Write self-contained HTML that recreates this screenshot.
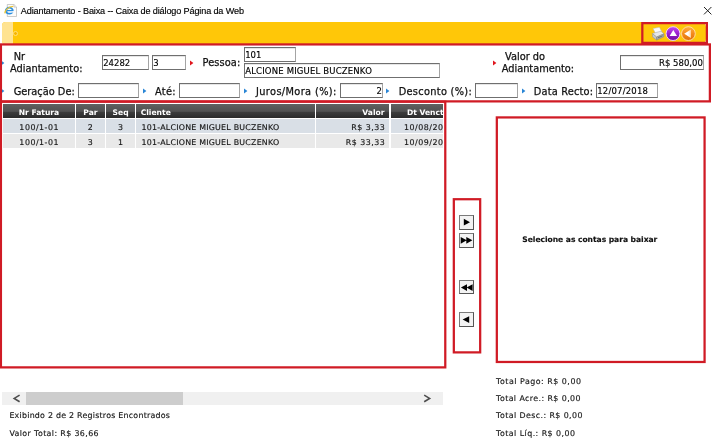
<!DOCTYPE html><html><head><meta charset="utf-8"><title>Adiantamento - Baixa</title><style>
html,body{margin:0;padding:0;background:#fff;}
body{will-change:transform;width:719px;height:443px;position:relative;overflow:hidden;font-family:"DejaVu Sans","Liberation Sans",sans-serif;color:#000;}
.a{position:absolute;white-space:pre;line-height:1;}
.t{font-family:"Liberation Sans",sans-serif;font-size:9.1px;letter-spacing:-0.136px;color:#000;-webkit-text-stroke:0.15px #000;}
.l{font-size:9.8px;color:#111;-webkit-text-stroke:0.25px #111;}
.in{position:absolute;box-sizing:border-box;background:#fff;border:1px solid #6f6f6f;border-right-color:#a4a4a4;box-shadow:inset 0 1px 0 #e6e6e6;font-size:8.5px;line-height:1;white-space:pre;color:#000;overflow:hidden;}
.in span{-webkit-text-stroke:0.15px #000;position:absolute;top:2.6px;left:0.2px;letter-spacing:0px;}
.in span.r{left:auto;right:0.2px;}
.s{font-size:7.9px;color:#111;-webkit-text-stroke:0.15px #222;}
.th{position:absolute;top:104px;height:13.9px;background:linear-gradient(#626262 0%,#5a5a5a 20%,#525252 52%,#3c3c3c 60%,#2b2b2b 100%);color:#fff;font-weight:bold;font-size:7.6px;line-height:17.5px;white-space:pre;overflow:hidden;box-sizing:border-box;}
.td{-webkit-text-stroke:0.15px #222;position:absolute;height:14.5px;font-size:7.9px;letter-spacing:0.22px;line-height:18.3px;white-space:pre;overflow:hidden;color:#111;box-sizing:border-box;}
.r1{top:119.1px;height:13.6px;line-height:17.1px;background:#d9dfe6;}
.r2{top:133.8px;height:13.9px;line-height:17.7px;background:#e9e9e9;}
.c{text-align:center;}
.rt{text-align:right;}
.btn{position:absolute;left:459px;width:15px;height:14.5px;box-sizing:border-box;border:1px solid #7a7a7a;border-right-color:#555;border-bottom-color:#555;background:#f3f3f3;}
</style></head><body>
<svg class="a" style="left:0;top:0" width="24" height="20" viewBox="0 0 24 20">
<path d="M7.3 4.5h6.6l2.6 2.6v9.4H7.3z" fill="#fcfcfc" stroke="#b4b4b4" stroke-width=".7"/>
<path d="M13.9 4.5v2.6h2.6" fill="#ececec" stroke="#b4b4b4" stroke-width=".6"/>
<ellipse cx="9.3" cy="10.7" rx="3.5" ry="3" fill="none" stroke="#2b8fe0" stroke-width="1.8"/>
<rect x="9.3" y="10.9" width="4.6" height="1.7" fill="#fcfcfc"/>
<rect x="6.6" y="10" width="6.2" height="1.2" fill="#2b8fe0"/>
<path d="M4.8 13.4C5 9.8 8.6 6.6 13.2 6.4" fill="none" stroke="#f2c62a" stroke-width="1.2"/>
</svg>
<div class="a t" id="title" style="left:20.8px;top:6.9px">Adiantamento - Baixa -- Caixa de diálogo Página da Web</div>
<svg class="a" style="left:703px;top:6px" width="10" height="10" viewBox="0 0 10 10"><path d="M1 1l7.4 7.4M8.4 1L1 8.4" stroke="#222" stroke-width="1" fill="none"/></svg>
<div class="a" style="left:2.2px;top:22.2px;width:703.6px;height:21.8px;background:#ffc708;border-radius:3.5px 5px 5px 3.5px;"></div>
<div class="a" style="left:2.2px;top:22.2px;width:11.2px;height:21.8px;background:#ffe391;border-radius:3.5px 0 0 3.5px;"></div>
<div class="a" style="left:12.8px;top:30.6px;width:5.4px;height:5.4px;border-radius:50%;border:1.3px solid #ffe07a;background:#f7b500;box-sizing:border-box;"></div><div class="a" style="left:11px;top:30px;width:2.4px;height:7px;background:#ffe391;"></div>
<svg class="a" style="left:650px;top:25px" width="48" height="18" viewBox="650 25 48 18">
<defs>
<linearGradient id="gp" x1="0" y1="0" x2="0" y2="1"><stop offset="0" stop-color="#c04cf0"/><stop offset=".5" stop-color="#9a1fd0"/><stop offset="1" stop-color="#6f0c9c"/></linearGradient>
<linearGradient id="go" x1="0" y1="0" x2="0" y2="1"><stop offset="0" stop-color="#ffb040"/><stop offset=".5" stop-color="#f58a1a"/><stop offset="1" stop-color="#e07008"/></linearGradient>
<linearGradient id="gt" x1="0" y1="0" x2="1" y2="0"><stop offset="0" stop-color="#fff"/><stop offset=".55" stop-color="#fff"/><stop offset="1" stop-color="#ffd9a8"/></linearGradient>
</defs>
<path d="M653 28.6l6.4-1.4 2.4 4.6-6.2 1.8z" fill="#fbfbfb" stroke="#b8b8b8" stroke-width=".5"/>
<path d="M652.4 33.6l3.2-1 5.4-1.4 3 2.6-7.4 3.2z" fill="#e6e8ea" stroke="#9da1a5" stroke-width=".5"/>
<path d="M652.4 33.6l4.2 3.4v3.1l-4-3.2z" fill="#c4c8cc" stroke="#8e9296" stroke-width=".5"/>
<path d="M656.6 37l7.4-3.2-.2 3-7.2 3.3z" fill="#a4a8ad" stroke="#7e8286" stroke-width=".5"/>
<path d="M658 37.8l4.6-2" stroke="#5f6366" stroke-width=".8"/>
<circle cx="673" cy="33.6" r="6.9" fill="url(#gp)" stroke="#f3d9ff" stroke-width=".9"/>
<path d="M673.3 30.1l3.7 5.9h-7.4z" fill="#fff"/>
<circle cx="688.4" cy="33.6" r="6.9" fill="url(#go)" stroke="#ffe2b0" stroke-width=".9"/>
<path d="M684.2 33.7l6.7-4.2v8.4z" fill="url(#gt)"/>
</svg>
<div class="a l" style="left:13.7px;top:56.91px;height:0;line-height:0;">Nr</div>
<div class="a l" style="left:10px;top:68.91px;height:0;line-height:0;">Adiantamento:</div>
<div class="a l" style="left:202.5px;top:62.91px;height:0;line-height:0;letter-spacing:0.1px;">Pessoa:</div>
<div class="a l" style="left:505px;top:56.91px;height:0;line-height:0;">Valor do</div>
<div class="a l" style="left:501.7px;top:68.91px;height:0;line-height:0;">Adiantamento:</div>
<div class="a l" style="left:13.7px;top:91.91px;height:0;line-height:0;">Geração De:</div>
<div class="a l" style="left:155px;top:91.91px;height:0;line-height:0;letter-spacing:0.3px;">Até:</div>
<div class="a l" style="left:256px;top:91.91px;height:0;line-height:0;letter-spacing:0.37px;">Juros/Mora (%):</div>
<div class="a l" style="left:398.7px;top:91.91px;height:0;line-height:0;letter-spacing:0.3px;">Desconto (%):</div>
<div class="a l" style="left:533.7px;top:91.91px;height:0;line-height:0;letter-spacing:0.2px;">Data Recto:</div>
<div class="in" style="left:102px;top:55px;width:47.2px;height:15px"><span class="">24282</span></div>
<div class="in" style="left:152px;top:55px;width:34px;height:15px"><span class="">3</span></div>
<div class="in" style="left:244px;top:47px;width:52px;height:14.5px"><span class="">101</span></div>
<div class="in" style="left:244px;top:63px;width:196px;height:14.5px"><span class="" style="letter-spacing:0.17px">ALCIONE MIGUEL BUCZENKO</span></div>
<div class="in" style="left:620px;top:55px;width:84px;height:15px"><span class="r">R$ 580,00</span></div>
<div class="in" style="left:78px;top:83px;width:61px;height:15px"></div>
<div class="in" style="left:179px;top:83px;width:61px;height:15px"></div>
<div class="in" style="left:340px;top:83px;width:43px;height:15px"><span class="r">2</span></div>
<div class="in" style="left:475px;top:83px;width:43px;height:15px"></div>
<div class="in" style="left:596px;top:83px;width:62px;height:15px"><span class="" style="letter-spacing:0.2px">12/07/2018</span></div>
<svg class="a" style="left:190px;top:59.6px" width="4" height="6" viewBox="0 0 4 6"><path d="M0 .5l3.4 2.5L0 5.5z" fill="#e0161e"/></svg>
<svg class="a" style="left:493.2px;top:59.6px" width="4" height="6" viewBox="0 0 4 6"><path d="M0 .5l3.4 2.5L0 5.5z" fill="#e0161e"/></svg>
<svg class="a" style="left:1.2px;top:59.6px" width="4" height="6" viewBox="0 0 4 6"><path d="M0 .5l3.4 2.5L0 5.5z" fill="#2a86d6"/></svg>
<svg class="a" style="left:1.2px;top:88.4px" width="4" height="6" viewBox="0 0 4 6"><path d="M0 .5l3.4 2.5L0 5.5z" fill="#2a86d6"/></svg>
<svg class="a" style="left:142.5px;top:88.4px" width="4" height="6" viewBox="0 0 4 6"><path d="M0 .5l3.4 2.5L0 5.5z" fill="#2a86d6"/></svg>
<svg class="a" style="left:244px;top:88.4px" width="4" height="6" viewBox="0 0 4 6"><path d="M0 .5l3.4 2.5L0 5.5z" fill="#2a86d6"/></svg>
<svg class="a" style="left:386.3px;top:88.4px" width="4" height="6" viewBox="0 0 4 6"><path d="M0 .5l3.4 2.5L0 5.5z" fill="#2a86d6"/></svg>
<svg class="a" style="left:521.7px;top:88.4px" width="4" height="6" viewBox="0 0 4 6"><path d="M0 .5l3.4 2.5L0 5.5z" fill="#2a86d6"/></svg>
<div class="th c" style="left:3.2px;width:71.5px;">Nr Fatura</div>
<div class="th c" style="left:76.2px;width:28.6px;">Par</div>
<div class="th c" style="left:106.3px;width:28.6px;">Seq</div>
<div class="th " style="left:136.4px;width:178.3px;padding-left:4.3px;">Cliente</div>
<div class="th rt" style="left:316.3px;width:73.2px;padding-right:5px;">Valor</div>
<div class="th " style="left:391.3px;width:51.7px;padding-left:15.6px;">Dt Venct</div>
<div class="td r1 c" style="left:3.2px;width:71.5px;letter-spacing:0.5px;padding-left:0.5px;">100/1-01</div>
<div class="td r1 c" style="left:76.2px;width:28.6px;">2</div>
<div class="td r1 c" style="left:106.3px;width:28.6px;">3</div>
<div class="td r1 " style="left:136.4px;width:178.3px;padding-left:5.2px;">101-ALCIONE MIGUEL BUCZENKO</div>
<div class="td r1 rt" style="left:316.3px;width:73.2px;letter-spacing:0.5px;padding-right:4.2px;">R$ 3,33</div>
<div class="td r1 " style="left:391.3px;width:51.7px;letter-spacing:0.5px;padding-left:12.7px;">10/08/2018</div>
<div class="td r2 c" style="left:3.2px;width:71.5px;letter-spacing:0.5px;padding-left:0.5px;">100/1-01</div>
<div class="td r2 c" style="left:76.2px;width:28.6px;">3</div>
<div class="td r2 c" style="left:106.3px;width:28.6px;">1</div>
<div class="td r2 " style="left:136.4px;width:178.3px;padding-left:5.2px;">101-ALCIONE MIGUEL BUCZENKO</div>
<div class="td r2 rt" style="left:316.3px;width:73.2px;letter-spacing:0.5px;padding-right:4.2px;">R$ 33,33</div>
<div class="td r2 " style="left:391.3px;width:51.7px;letter-spacing:0.5px;padding-left:12.7px;">10/09/2018</div>
<div class="a" style="left:2px;top:392px;width:440.8px;height:12.6px;background:#f0f0f0;"></div>
<div class="a" style="left:26.2px;top:392px;width:156.7px;height:12.6px;background:#cdcdcd;"></div>
<svg class="a" style="left:12px;top:393px" width="10" height="11" viewBox="12 393 10 11"><path d="M19.6 395.1L14.2 398.4l5.4 3.3" fill="none" stroke="#4d4d4d" stroke-width="1.6"/></svg>
<svg class="a" style="left:422px;top:393px" width="10" height="11" viewBox="422 393 10 11"><path d="M424.2 395.1l5.4 3.3-5.4 3.3" fill="none" stroke="#4d4d4d" stroke-width="1.6"/></svg>
<div class="a s" style="left:9.4px;top:416.27px;height:0;line-height:0;letter-spacing:0.238px;">Exibindo 2 de 2 Registros Encontrados</div>
<div class="a s" style="left:9.4px;top:434.27px;height:0;line-height:0;letter-spacing:0.38px;">Valor Total: R$ 36,66</div>
<div class="a s" style="left:496px;top:381.67px;height:0;line-height:0;letter-spacing:0.51px;">Total Pago: R$ 0,00</div>
<div class="a s" style="left:496px;top:398.97px;height:0;line-height:0;letter-spacing:0.41px;">Total Acre.: R$ 0,00</div>
<div class="a s" style="left:496px;top:416.37px;height:0;line-height:0;letter-spacing:0.417px;">Total Desc.: R$ 0,00</div>
<div class="a s" style="left:496px;top:433.67px;height:0;line-height:0;letter-spacing:0.456px;">Total Líq.: R$ 0,00</div>
<div class="a s" style="left:522.3px;top:239.97px;height:0;line-height:0;font-size:7.6px;font-weight:bold;letter-spacing:-0.04px;">Selecione as contas para baixar</div>
<div class="btn" style="top:215px"><svg style="position:absolute;left:-1px;top:-1px" width="15" height="14.5" viewBox="0 0 15 14.5" fill="#000"><path d="M4.8 3.8l6.2 3.4-6.2 3.4z"/></svg></div>
<div class="btn" style="top:233px"><svg style="position:absolute;left:-1px;top:-1px" width="15" height="14.5" viewBox="0 0 15 14.5" fill="#000"><path d="M1.7 3.9l6 3.4-6 3.4zM7.3 3.9l6.1 3.4-6.1 3.4z"/></svg></div>
<div class="btn" style="top:279.5px"><svg style="position:absolute;left:-1px;top:-1px" width="15" height="14.5" viewBox="0 0 15 14.5" fill="#000"><path d="M13.6 4.2l-6 3.4 6 3.4zM8 4.2L1.9 7.6 8 11z"/></svg></div>
<div class="btn" style="top:312px"><svg style="position:absolute;left:-1px;top:-1px" width="15" height="14.5" viewBox="0 0 15 14.5" fill="#000"><path d="M10.2 4.2L3.6 7.6l6.6 3.4z"/></svg></div>
<svg class="a" style="left:0;top:0;pointer-events:none" width="719" height="443" viewBox="0 0 719 443"><rect x="0.925" y="44.425" width="708.95" height="56.95" fill="none" stroke="#d01b25" stroke-width="2.25"/><rect x="642.325" y="23.125" width="64.54999999999995" height="19.75" fill="none" stroke="#d01b25" stroke-width="2.25"/><rect x="0.925" y="101.725" width="444.34999999999997" height="265.65" fill="none" stroke="#d01b25" stroke-width="2.25"/><rect x="453.825" y="199.225" width="26.350000000000023" height="153.15" fill="none" stroke="#d01b25" stroke-width="2.25"/><rect x="496.825" y="117.425" width="207.75000000000006" height="244.55" fill="none" stroke="#d01b25" stroke-width="2.25"/></svg>
</body></html>
